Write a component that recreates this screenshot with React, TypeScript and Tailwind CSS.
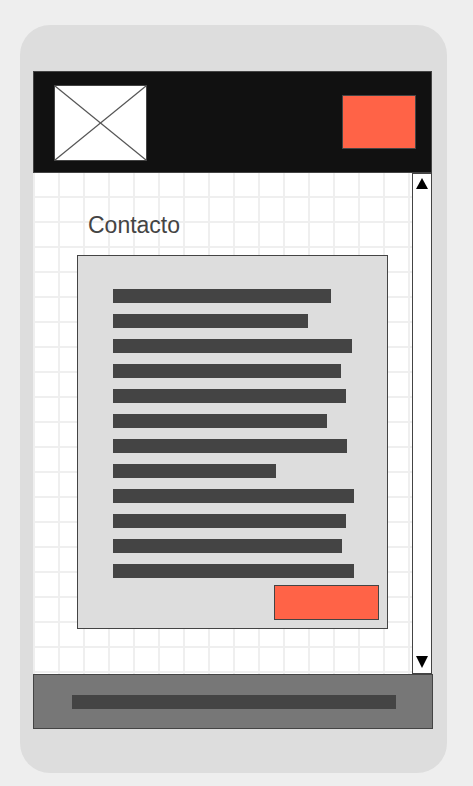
import React from "react";

const lines = [218, 195, 239, 228, 233, 214, 234, 163, 241, 233, 229, 241];

function Placeholder() {
  return (
    <svg width="93" height="76" viewBox="0 0 93 76" className="block">
      <rect x="0.5" y="0.5" width="92" height="75" fill="#fff" stroke="#444" />
      <line x1="1" y1="1" x2="92" y2="75" stroke="#555" strokeWidth="1.2" />
      <line x1="92" y1="1" x2="1" y2="75" stroke="#555" strokeWidth="1.2" />
    </svg>
  );
}

function Scrollbar() {
  return (
    <div className="flex h-full w-[20px] flex-col justify-between border border-[#444] bg-white pb-[5px] pl-[3px] pt-[4px]">
      <svg width="12" height="11" viewBox="0 0 12 11">
        <polygon points="6,0 12,11 0,11" fill="#000" />
      </svg>
      <svg width="12" height="12" viewBox="0 0 12 12">
        <polygon points="0,0 12,0 6,12" fill="#000" />
      </svg>
    </div>
  );
}

export default function App() {
  return (
    <div className="min-h-[786px] w-[473px] bg-[#eeeeee] pt-[25px] pl-[20px] font-['Liberation_Sans',Arial,sans-serif]">
      <div className="h-[748px] w-[427px] rounded-[30px] bg-[#dddddd] pl-[13px] pt-[46px]">
        {/* header */}
        <div className="flex h-[102px] w-[399px] items-start justify-between border border-[#444] bg-[#111] pl-[20px] pr-[15px] pt-[13px]">
          <Placeholder />
          <div className="mt-[10px] h-[54px] w-[74px] border border-[#444] bg-[#ff6347]" />
        </div>

        {/* body */}
        <div className="flex h-[501px] w-[399px]">
          <div className="h-full w-[379px] bg-white bg-[linear-gradient(to_right,#efefef_2px,transparent_2px),linear-gradient(to_bottom,#efefef_2px,transparent_2px)] bg-[size:25px_25px] bg-[position:0_-2px] pl-[44px] pt-[41px]">
            <h1 className="pl-[11px] text-[23px] leading-[23px] text-[#444]">Contacto</h1>
            <div className="mt-[18px] flex h-[374px] w-[311px] flex-col border border-[#444] bg-[#dddddd] pl-[35px] pr-[8px] pt-[33px]">
              <div className="flex flex-col gap-[11px]">
                {lines.map((w, i) => (
                  <div key={i} className="h-[14px] bg-[#444]" style={{ width: w }} />
                ))}
              </div>
              <div className="mt-[7px] h-[35px] w-[105px] self-end border border-[#444] bg-[#ff6347]" />
            </div>
          </div>
          <Scrollbar />
        </div>

        {/* footer */}
        <div className="h-[55px] w-[400px] border border-[#444] bg-[#777] pl-[38px] pt-[20px]">
          <div className="h-[14px] w-[324px] bg-[#444]" />
        </div>
      </div>
    </div>
  );
}
